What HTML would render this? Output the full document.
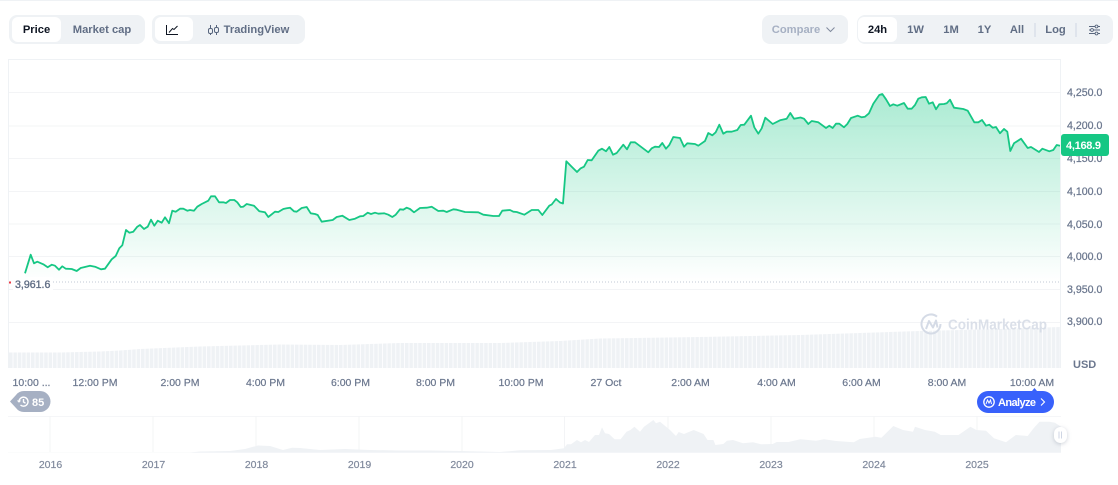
<!DOCTYPE html>
<html><head><meta charset="utf-8"><style>
html,body{margin:0;padding:0;background:#fff;width:1118px;height:485px;overflow:hidden}
svg{display:block}
text{font-family:"Liberation Sans",sans-serif}
.ax{font-size:10.6px;fill:#6b778e;stroke:#6b778e;stroke-width:.25px}
.xl{font-size:10.5px;fill:#6b778e;stroke:#6b778e;stroke-width:.2px;text-anchor:middle}
.yr{font-size:10.5px;fill:#808a9d;stroke:#808a9d;stroke-width:.2px;text-anchor:middle}
.bt{font-size:11.2px;font-weight:bold;fill:#616e85;text-anchor:middle}
</style></head><body>
<svg width="1118" height="485" viewBox="0 0 1118 485" xmlns="http://www.w3.org/2000/svg">
<defs>
<linearGradient id="g" gradientUnits="userSpaceOnUse" x1="0" y1="94" x2="0" y2="282">
<stop offset="0" stop-color="#16c784" stop-opacity=".36"/><stop offset="1" stop-color="#16c784" stop-opacity="0"/>
</linearGradient>
<pattern id="v" patternUnits="userSpaceOnUse" x="9" y="0" width="4.4" height="10">
<rect width="3.6" height="10" fill="#eff2f5"/>
</pattern>
</defs>
<rect width="1118" height="1" fill="#eff2f5"/>

<!-- toolbar -->
<rect x="9" y="15" width="136" height="29" rx="8" fill="#eff2f5"/>
<rect x="12" y="17" width="49" height="25" rx="6" fill="#fff"/>
<text x="36.500" y="33" class="bt" style="fill:#0d1421">Price</text>
<text x="102" y="33" class="bt">Market cap</text>
<rect x="152" y="15" width="153" height="29" rx="8" fill="#eff2f5"/>
<rect x="155" y="17" width="38" height="24" rx="6" fill="#fff"/>
<path d="M166.500 25v9.500h11.500M169 32.500l3.500-4 1.500 1 3.500-3.500" fill="none" stroke="#0d1421" stroke-width="1"/>
<path d="M210.500 25v10M216.500 25v10" stroke="#58667e" stroke-width="1"/>
<rect x="208.500" y="28.500" width="4" height="5" rx="1.500" fill="#eff2f5" stroke="#58667e"/>
<rect x="214.500" y="27.500" width="4" height="5" rx="1.500" fill="#eff2f5" stroke="#58667e"/>
<text x="256.500" y="33" class="bt">TradingView</text>

<rect x="762" y="15" width="86" height="29" rx="8" fill="#eff2f5"/>
<text x="796" y="33" class="bt" style="fill:#a6b0c3">Compare</text>
<path d="M826.500 27.500l4 4 4-4" fill="none" stroke="#808a9d" stroke-width="1"/>
<rect x="857" y="15" width="256" height="29" rx="8" fill="#eff2f5"/>
<rect x="858" y="17" width="39" height="25" rx="6" fill="#fff"/>
<text x="877.500" y="33" class="bt" style="fill:#0d1421">24h</text>
<text x="915.500" y="33" class="bt">1W</text>
<text x="951" y="33" class="bt">1M</text>
<text x="984.500" y="33" class="bt">1Y</text>
<text x="1017" y="33" class="bt">All</text>
<text x="1055.500" y="33" class="bt">Log</text>
<path d="M1035 23v14M1076 23v14" stroke="#cfd6e4" stroke-width="1"/>
<path d="M1089 26.500h11M1089 30h11M1089 33.500h11" stroke="#58667e" stroke-width=".9"/>
<circle cx="1096.500" cy="26.500" r="1.400" fill="#eff2f5" stroke="#58667e" stroke-width=".9"/>
<circle cx="1092" cy="30" r="1.400" fill="#eff2f5" stroke="#58667e" stroke-width=".9"/>
<circle cx="1096.500" cy="33.500" r="1.400" fill="#eff2f5" stroke="#58667e" stroke-width=".9"/>

<!-- chart frame and grid -->
<path d="M8.500 368V59.500H1060.500V368" fill="none" stroke="#eff2f5"/>
<path d="M9 92.500H1060M9 126H1060M9 158.500H1060M9 191.500H1060M9 224H1060M9 256.500H1060M9 289.500H1060M9 322.500H1060" stroke="#f3f4f6"/>

<!-- volume -->
<path d="M9 352.500L60 352.500 100 351.500 120 350.500 140 349 200 346.500 280 344.500 340 345 400 343 500 343 560 341 600 338.500 700 337 800 335 860 333 920 331 1000 329 1060 327V368H9Z" fill="url(#v)"/>

<!-- price area -->
<path fill="url(#g)" d="M25 282L25 273.3 30.7 254.7 34 263.3 37.3 261.7 43.3 264.3 47.7 267.3 51.7 264.7 55 265.7 59 269.7 62.3 266.3 65.7 268.7 71.7 269 76.7 271 80.7 268 90 265.7 95 266.7 101 269.3 105 268.7 111.7 259.3 115.7 256 119.3 248.3 122.3 245.3 126 230 129.3 232.7 133.3 231.7 137.3 226.7 140 225 144 229 147.7 226.7 151 219.7 154.3 225.7 157.7 220.7 161.7 222.7 165 217.3 169 223.3 172.3 210.7 175.7 211.7 180 208.7 183.3 208.7 187.3 210.7 190 210 194 210.7 197.3 206.7 201.7 204 208.3 200.7 211 196.3 215 196.3 219 202.3 223.3 202.3 226 203 230 200 234.3 200 237.3 202.3 240.7 207 243.3 206.7 246.7 204 254 205.7 259.3 211.3 265 212.3 268.3 217 275 211.7 278.3 212 283.3 209 286.7 208.3 290 207.7 294 211.3 296.7 211.7 301.7 208 306.7 207 310.7 213.3 315 214 317.7 215 321.7 221.7 332.7 220 336.7 217 342.3 215.7 349.3 220 355 218.7 360 216.3 363.3 216 367.7 212.7 371 214 375 212.7 378.3 213.7 384.3 213.3 388.3 214.7 392.3 217 395.7 214.7 400 209.3 403.3 209.7 406.7 207.7 410 209 414 212.3 420 208 426.7 207.7 431.7 206.7 438.3 211 443.3 210.7 446.7 212 453.3 209.3 456.7 209.7 465 212 478.3 212.3 483.3 214.7 493.3 216 499 216 502.3 210.7 510 210 513.3 211.7 516.7 212 524.3 214.7 531.7 210 538.3 210 542.3 215 549.3 205.7 551.7 204.5 556 199 560 202.5 563 203.5 566.3 161.3 571.7 166.7 577 172 580.7 168.3 584 166.7 587.7 160 591.7 160.3 598.3 150.7 602 148.7 606 151.3 609.3 147 613 154.7 616.7 153 623.3 144.7 627 149.3 630.7 142.3 635 142.3 648.3 152.3 651.7 148.3 655 146.7 659 147 662.3 143 666 148.7 669.3 145 673.3 137 680 138 684 146.7 687.3 143.3 695 144 698.3 145.7 705 141 708.3 133 712.3 135.3 715.7 132.3 719.3 124.7 723.3 133.7 726.7 131.7 731.7 131.7 737.3 130 740.7 125 744.3 124.7 751 115.7 754.3 127.3 758.3 133.7 761.7 128.3 765.3 117.7 772.7 124 780 120.3 786.7 118.7 790.3 113 794 118.7 800.5 117.5 804 118.7 808.3 124 811.7 121 818.3 122.3 826 128 829.3 125.7 832.7 128 836 123.7 839.3 123.7 844 127.3 847.3 124 851 118 857.7 115.7 861.7 117.3 865 116.7 869 113.3 873.3 103.7 879.3 95 882.3 94 886 99.3 890 106 893.3 104.3 897.3 105.7 904 103 907.7 108.7 911.7 108.7 915 105 918.3 98.7 921.7 97.3 925.7 97 929 103.7 932.7 102.3 936 109.3 939.3 104.3 944 104 946.7 103.3 950 99.7 954 107.7 963.3 109 967.7 110.7 974.3 122.3 978.3 122.3 982 120 986 125.7 989.3 124.7 992.7 127.7 996 127 1000 133.3 1004 129 1007.3 131.7 1010.3 151 1014 143.3 1021 138.7 1027.7 148 1031 147 1039 152 1042.3 148.7 1049.3 151.3 1053.3 150 1056.7 145 1060 145.7V282Z"/>

<!-- base price line -->
<rect x="13" y="277" width="40" height="13" fill="#fff"/>
<path d="M53 282H1060" stroke="#c2c8d4" stroke-width="1" stroke-dasharray="1 2"/>
<rect x="9" y="281.500" width="2" height="2" fill="#ea3943"/>
<text x="15" y="288" class="ax" style="fill:#616e85;stroke:#616e85;stroke-width:.35px">3,961.6</text>

<!-- price line -->
<path fill="none" stroke="#16c784" stroke-width="1.8" stroke-linejoin="round" d="M25 273.3 30.7 254.7 34 263.3 37.3 261.7 43.3 264.3 47.7 267.3 51.7 264.7 55 265.7 59 269.7 62.3 266.3 65.7 268.7 71.7 269 76.7 271 80.7 268 90 265.7 95 266.7 101 269.3 105 268.7 111.7 259.3 115.7 256 119.3 248.3 122.3 245.3 126 230 129.3 232.7 133.3 231.7 137.3 226.7 140 225 144 229 147.7 226.7 151 219.7 154.3 225.7 157.7 220.7 161.7 222.7 165 217.3 169 223.3 172.3 210.7 175.7 211.7 180 208.7 183.3 208.7 187.3 210.7 190 210 194 210.7 197.3 206.7 201.7 204 208.3 200.7 211 196.3 215 196.3 219 202.3 223.3 202.3 226 203 230 200 234.3 200 237.3 202.3 240.7 207 243.3 206.7 246.7 204 254 205.7 259.3 211.3 265 212.3 268.3 217 275 211.7 278.3 212 283.3 209 286.7 208.3 290 207.7 294 211.3 296.7 211.7 301.7 208 306.7 207 310.7 213.3 315 214 317.7 215 321.7 221.7 332.7 220 336.7 217 342.3 215.7 349.3 220 355 218.7 360 216.3 363.3 216 367.7 212.7 371 214 375 212.7 378.3 213.7 384.3 213.3 388.3 214.7 392.3 217 395.7 214.7 400 209.3 403.3 209.7 406.7 207.7 410 209 414 212.3 420 208 426.7 207.7 431.7 206.7 438.3 211 443.3 210.7 446.7 212 453.3 209.3 456.7 209.7 465 212 478.3 212.3 483.3 214.7 493.3 216 499 216 502.3 210.7 510 210 513.3 211.7 516.7 212 524.3 214.7 531.7 210 538.3 210 542.3 215 549.3 205.7 551.7 204.5 556 199 560 202.5 563 203.5 566.3 161.3 571.7 166.7 577 172 580.7 168.3 584 166.7 587.7 160 591.7 160.3 598.3 150.7 602 148.7 606 151.3 609.3 147 613 154.7 616.7 153 623.3 144.7 627 149.3 630.7 142.3 635 142.3 648.3 152.3 651.7 148.3 655 146.7 659 147 662.3 143 666 148.7 669.3 145 673.3 137 680 138 684 146.7 687.3 143.3 695 144 698.3 145.7 705 141 708.3 133 712.3 135.3 715.7 132.3 719.3 124.7 723.3 133.7 726.7 131.7 731.7 131.7 737.3 130 740.7 125 744.3 124.7 751 115.7 754.3 127.3 758.3 133.7 761.7 128.3 765.3 117.7 772.7 124 780 120.3 786.7 118.7 790.3 113 794 118.7 800.5 117.5 804 118.7 808.3 124 811.7 121 818.3 122.3 826 128 829.3 125.7 832.7 128 836 123.7 839.3 123.7 844 127.3 847.3 124 851 118 857.7 115.7 861.7 117.3 865 116.7 869 113.3 873.3 103.7 879.3 95 882.3 94 886 99.3 890 106 893.3 104.3 897.3 105.7 904 103 907.7 108.7 911.7 108.7 915 105 918.3 98.7 921.7 97.3 925.7 97 929 103.7 932.7 102.3 936 109.3 939.3 104.3 944 104 946.7 103.3 950 99.7 954 107.7 963.3 109 967.7 110.7 974.3 122.3 978.3 122.3 982 120 986 125.7 989.3 124.7 992.7 127.7 996 127 1000 133.3 1004 129 1007.3 131.7 1010.3 151 1014 143.3 1021 138.7 1027.7 148 1031 147 1039 152 1042.3 148.7 1049.3 151.3 1053.3 150 1056.7 145 1060 145.7"/>

<!-- watermark -->
<g fill="none" stroke="#d5dbe6" stroke-width="2">
<path d="M940.500 324a9.500 9.500 0 1 1-3.500-7.400"/>
<path d="M926 329l3-8 4 6.500 3-7 1.500 7" stroke-linejoin="round"/>
</g>
<text x="948" y="329.500" style="font-size:15px;font-weight:bold;fill:#d5dbe6" textLength="99" lengthAdjust="spacingAndGlyphs" opacity=".85">CoinMarketCap</text>

<!-- y axis -->
<text x="1067" y="96" class="ax">4,250.0</text>
<text x="1067" y="129" class="ax">4,200.0</text>
<text x="1067" y="162" class="ax">4,150.0</text>
<text x="1067" y="195" class="ax">4,100.0</text>
<text x="1067" y="228" class="ax">4,050.0</text>
<text x="1067" y="260" class="ax">4,000.0</text>
<text x="1067" y="293" class="ax">3,950.0</text>
<text x="1067" y="325" class="ax">3,900.0</text>
<text x="1073" y="368" style="font-size:11px;font-weight:bold;fill:#6b778e">USD</text>
<rect x="1061" y="134" width="48" height="22" rx="3" fill="#16c784"/>
<text x="1066" y="149" style="font-size:11px;font-weight:bold;fill:#fff" textLength="35">4,168.9</text>

<!-- x axis -->
<text x="31.500" y="386" class="xl">10:00 ...</text>
<text x="95" y="386" class="xl">12:00 PM</text>
<text x="180" y="386" class="xl">2:00 PM</text>
<text x="265.500" y="386" class="xl">4:00 PM</text>
<text x="350.500" y="386" class="xl">6:00 PM</text>
<text x="435.500" y="386" class="xl">8:00 PM</text>
<text x="521" y="386" class="xl">10:00 PM</text>
<text x="606" y="386" class="xl">27 Oct</text>
<text x="690.500" y="386" class="xl">2:00 AM</text>
<text x="776.500" y="386" class="xl">4:00 AM</text>
<text x="861.500" y="386" class="xl">6:00 AM</text>
<text x="947" y="386" class="xl">8:00 AM</text>
<text x="1032" y="386" class="xl">10:00 AM</text>

<!-- badge 85 -->
<path d="M10 401.500L16 395Q19 391 24 391H40A10.500 10.500 0 0 1 40 412H24Q19 412 16 408Z" fill="#a6b0c3"/>
<g fill="none" stroke="#fff" stroke-width="1.400">
<path d="M19 401.500a4.500 4.500 0 1 1 1.500 3.500"/>
<path d="M23.500 399v3l2 1.200"/>
</g>
<path d="M17.500 400.500l1.500 1.500 1.500-1.500" fill="none" stroke="#fff" stroke-width="1"/>
<text x="32" y="406" style="font-size:11px;font-weight:bold;fill:#fff">85</text>

<!-- analyze -->
<path d="M1032 391l2.500-3 2.500 3Z" fill="#3861fb"/>
<rect x="977" y="391" width="77" height="22" rx="11" fill="#3861fb"/>
<circle cx="989" cy="402" r="5.200" fill="none" stroke="#fff" stroke-width="1.300"/>
<path d="M986 404l1.500-4 1.500 3 1.500-3 1 4" fill="none" stroke="#fff" stroke-width="1"/>
<text x="998" y="406" style="font-size:11px;font-weight:bold;fill:#fff" textLength="38">Analyze</text>
<path d="M1041 398.500l3.500 3.500-3.500 3.500" fill="none" stroke="#fff" stroke-width="1.100"/>

<!-- navigator -->
<path d="M8 416.500H1061" stroke="#f5f6f8"/>
<path d="M50 416V452M153 416V452M256 416V452M359 416V452M462 416V452M564.500 416V452M668 416V452M771 416V452M874 416V452M977 416V452" stroke="#f3f4f6"/>
<path fill="#eff2f5" d="M8 452.500L190 452.500 200 451.500 230 451 245 449 258 445.500 270 446 283 450 292 447.700 300 448 320 450 345 449 370 450 400 450.500 430 450.500 460 451 500 452 520 450.300 551 450 564 448.300 567 444.300 571 444.300 577 440 581 442.300 585 440 589 442 595 435 599 435 602 427.300 605 433.300 609 434 614.600 439.300 620.600 439.300 626.500 431.700 630.400 430 634.400 426.700 640 431.700 644 426.700 653.400 420 656 423.300 660 421.700 670 430 676 436 678.700 432 684 434 693.700 430 703.600 434 707.500 440 713.400 440 715.400 445 723.300 444 727 440.700 733 440 743 443.300 753 442.300 761 444.300 772.700 444 776.700 442 788.500 442 800.400 439.300 816 440.700 824 439.300 836 441 853.800 442.300 859.700 439 875.500 436.700 881.400 437.700 893.300 426 903 430 913 431.700 915 426.700 925 430 934.800 431.700 940.700 435 958.500 435 970.400 426.700 976.300 430 986 430.700 994 438.300 1006 442.300 1015.800 435 1027.700 436 1033.600 428.300 1039.500 421.700 1049.400 421.700 1055 422.700 1061 426.700V452.800H8Z"/>
<rect x="1054" y="427" width="13" height="16" rx="6.500" fill="#fff" style="filter:drop-shadow(0 1px 2px rgba(88,102,126,.3))"/>
<path d="M1059 431.500v7M1061.500 431.500v7" stroke="#cfd6e4" stroke-width="1"/>

<text x="50.500" y="468" class="yr">2016</text>
<text x="153.500" y="468" class="yr">2017</text>
<text x="256.500" y="468" class="yr">2018</text>
<text x="359.500" y="468" class="yr">2019</text>
<text x="462" y="468" class="yr">2020</text>
<text x="565" y="468" class="yr">2021</text>
<text x="668" y="468" class="yr">2022</text>
<text x="771" y="468" class="yr">2023</text>
<text x="874" y="468" class="yr">2024</text>
<text x="977" y="468" class="yr">2025</text>
</svg>
</body></html>
